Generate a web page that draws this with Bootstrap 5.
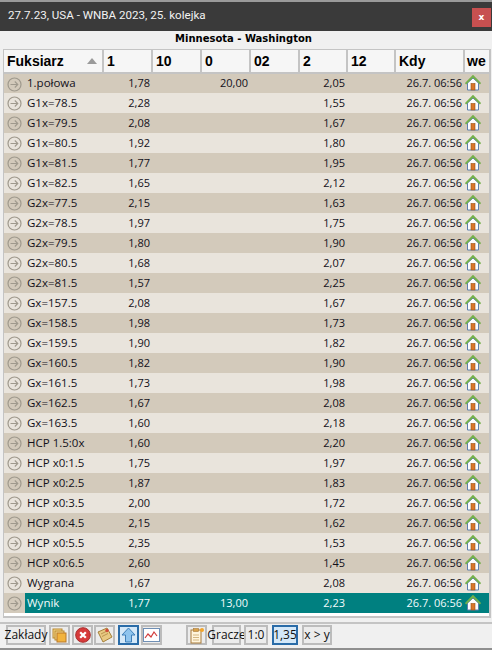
<!doctype html>
<html lang="en">

<head>
	<meta charset="utf-8">
	<meta name="viewport" content="width=device-width, initial-scale=1">
	<title>WNBA 2023</title>
	<link href="https://cdn.jsdelivr.net/npm/bootstrap@5.3.5/dist/css/bootstrap.min.css" rel="stylesheet"
		crossorigin="anonymous">
	<style>
		html, body { height: 100%; }
		body { background: #f0f0f0; font-family: "Open Sans", "Noto Sans", sans-serif; overflow: hidden; }
		.app-window { width: 492px; height: 650px; border-bottom: 2px solid #8f8f8f; }
		.title-bar { height: 31px; background: #3a3a3a; border-top: 2px solid #9a9a9a; color: #f2f2f2; font: 11.6px/27px Roboto, sans-serif; padding-left: 8px; }
		.close-box { width: 19px; height: 19px; margin: 6px 1px 0 0; background: #c75050; color: #fff; font: bold 9px/18px "DejaVu Sans", sans-serif; text-align: center; }
		.match-bar { height: 16px; padding-right: 5px; font: bold 10px/15px "DejaVu Sans", sans-serif; color: #000; text-align: center; }
		.odds-frame { height: 573px; margin: 2px 1px 0 3px; background: #fff; border: 1px solid #c4c4c4; border-bottom-width: 2px; border-right-width: 2px; }
		.odds-table { table-layout: fixed; width: 485px; border-collapse: collapse; margin: 0; color: #12101a; }
		.col-name { width: 99px; }
		.col-odd { width: 49px; }
		.col-odd-narrow { width: 48px; }
		.col-when { width: 69px; }
		.odds-table th { height: 23px; padding: 0 0 0 3px; background: #f6f6f6; border-right: 2px solid #c4c4c4; border-bottom: 2px solid #c4c4c4; font: bold 14px "Liberation Sans", sans-serif; color: #000; white-space: nowrap; }
		.odds-table th:last-child { padding-left: 2px; border-right: 0; }
		.odds-table td { height: 20px; padding: 0 2px 0 0; font-size: 11px; line-height: 18px; text-align: right; white-space: nowrap; border: 0; }
		.odds-table td.name-cell { text-align: left; padding-left: 23px; position: relative; font-size: 11.5px; }
		.odds-table td.home-cell { padding: 0 0 0 1px; text-align: left; line-height: 0; }
		.row-dark td { background: #d3cabb; }
		.row-light td { background: #e9e4dc; }
		.row-picked td { background: #008080; color: #f2fbfb; }
		.row-picked td.name-cell { background: linear-gradient(to right, #d3cabb 21px, #008080 21px); }
		.go-icon { position: absolute; left: 3px; top: 3px; }
		.sort-mark { width: 0; height: 0; border: 5px solid transparent; border-top: 0; border-bottom: 6px solid #9a9a9a; margin: 0 5px 0 0; }
		.tool-bar { height: 26px; margin-top: 4px; border-top: 2px solid #c4c4c4; padding: 1px 0 0 6px; }
		.tool-btn { height: 20px; width: 21px; flex: none; padding: 0; border: 2px solid #bcbcbc; background: #ececec; font-size: 12px; line-height: 16px; color: #111; display: flex; align-items: center; justify-content: center; border-radius: 0; white-space: nowrap; }
		.tool-btn.is-on { background: #d4e8f8; border-color: #2a6ca8; }
		.btn-tabs { width: 40px; }
		.btn-players { width: 29px; }
		.btn-score { width: 24px; }
		.btn-odds { width: 26px; }
		.btn-over { width: 30px; }
		.left-1 { margin-left: 1px; }
		.left-2 { margin-left: 2px; }
		.left-3 { margin-left: 3px; }
		.left-4 { margin-left: 4px; }
		.left-5 { margin-left: 5px; }
		.left-24 { margin-left: 24px; }
	</style>
</head>

<body>
	<svg width="0" height="0" class="position-absolute">
		<symbol id="go" viewBox="0 0 15 15">
			<circle cx="7.5" cy="7.5" r="6.5" fill="none" stroke="#9f998d" stroke-width="1.2"/>
			<path d="M3.5 7.500h7M7.800 4.500l3 3-3 3" fill="none" stroke="#9f998d" stroke-width="1.100"/>
		</symbol>
		<symbol id="home" viewBox="0 0 16 16">
			<path d="M2.500 8v7h11V8L8 3z" fill="#fdfdfd" stroke="#5c7fae"/>
			<path d="M.5 8.800 8 1.200l7.500 7.600" fill="none" stroke="#74b04a" stroke-width="2"/>
			<rect x="6" y="8.500" width="4" height="6.500" fill="#d9772a" stroke="#9a5216" stroke-width=".6"/>
		</symbol>
	</svg>

	<div class="app-window d-flex flex-column">
		<div class="title-bar d-flex justify-content-between">
			<span>27.7.23, USA - WNBA 2023, 25. kolejka</span>
			<span class="close-box">x</span>
		</div>
		<div class="match-bar">Minnesota - Washington</div>
		<div class="odds-frame overflow-hidden">
			<table class="odds-table">
				<colgroup>
					<col class="col-name"><col class="col-odd"><col class="col-odd"><col class="col-odd">
					<col class="col-odd"><col class="col-odd-narrow"><col class="col-odd-narrow"><col class="col-when"><col>
				</colgroup>
				<thead>
					<tr>
						<th><div class="d-flex justify-content-between align-items-center">Fuksiarz<span class="sort-mark"></span></div></th>
						<th>1</th><th>10</th><th>0</th><th>02</th><th>2</th><th>12</th><th>Kdy</th><th>we</th>
					</tr>
				</thead>
				<tbody id="oddsRows"></tbody>
			</table>
		</div>
		<div class="tool-bar d-flex">
			<button class="tool-btn btn-tabs">Zakłady</button>
			<button class="tool-btn left-3">
				<svg width="15" height="15" viewBox="0 0 15 15"><rect x="1" y="1" width="9" height="9" fill="#f6d98a" stroke="#b9872f"/><rect x="3" y="3" width="9" height="9" fill="#f6d98a" stroke="#b9872f"/><rect x="5" y="5" width="9" height="9" fill="#f2b33d" stroke="#b9782a"/></svg>
			</button>
			<button class="tool-btn left-2">
				<svg width="16" height="16" viewBox="0 0 17 17"><circle cx="8.5" cy="8.5" r="7.800" fill="#d63a3a" stroke="#a52b2b"/><path d="M5.500 5.500l6 6M11.500 5.500l-6 6" stroke="#fff" stroke-width="2.400"/></svg>
			</button>
			<button class="tool-btn left-1">
				<svg width="16" height="16" viewBox="0 0 16 16"><path d="M1 5 10 1l5 9-9 5z" fill="#e8c982" stroke="#a5803a"/><path d="M4 7l6-3M5 9.500l6-3" stroke="#a5803a" stroke-width=".7"/><circle cx="10" cy="3.500" r="1.700" fill="#d24a3a"/></svg>
			</button>
			<button class="tool-btn is-on left-3">
				<svg width="15" height="16" viewBox="0 0 15 16"><path d="M7.500 1 14 8h-3.500v7h-6V8H1z" fill="#8ec4ee" stroke="#3f7fb8"/></svg>
			</button>
			<button class="tool-btn left-2">
				<svg width="17" height="14" viewBox="0 0 17 14"><rect x=".5" y=".5" width="16" height="13" fill="#fff" stroke="#6f8fb5"/><path d="M2 10l3-4 3 3 3-5 3 4" fill="none" stroke="#d23b3b" stroke-width="1.200"/></svg>
			</button>
			<button class="tool-btn left-24">
				<svg width="16" height="17" viewBox="0 0 16 17"><rect x="2" y="3" width="10" height="13" fill="#fff5dc" stroke="#a87a3a"/><rect x="4.500" y="1.500" width="5" height="3" fill="#d9a24a" stroke="#a87a3a" stroke-width=".6"/><path d="M4 8h6M4 10.500h6M4 13h6" stroke="#c9a66a" stroke-width=".8"/><circle cx="13" cy="3" r="2" fill="#f3a52b"/></svg>
			</button>
			<button class="tool-btn btn-players left-5">Gracze</button>
			<button class="tool-btn btn-score left-3">1:0</button>
			<button class="tool-btn btn-odds is-on left-4">1,35</button>
			<button class="tool-btn btn-over left-4">x &gt; y</button>
		</div>
	</div>

	<script src="https://cdn.jsdelivr.net/npm/bootstrap@5.3.5/dist/js/bootstrap.bundle.min.js"
		crossorigin="anonymous"></script>
	<script>
		const rows = [
			['1.połowa', '1,78', '20,00', '2,05'], ['G1x=78.5', '2,28', '', '1,55'], ['G1x=79.5', '2,08', '', '1,67'],
			['G1x=80.5', '1,92', '', '1,80'], ['G1x=81.5', '1,77', '', '1,95'], ['G1x=82.5', '1,65', '', '2,12'],
			['G2x=77.5', '2,15', '', '1,63'], ['G2x=78.5', '1,97', '', '1,75'], ['G2x=79.5', '1,80', '', '1,90'],
			['G2x=80.5', '1,68', '', '2,07'], ['G2x=81.5', '1,57', '', '2,25'], ['Gx=157.5', '2,08', '', '1,67'],
			['Gx=158.5', '1,98', '', '1,73'], ['Gx=159.5', '1,90', '', '1,82'], ['Gx=160.5', '1,82', '', '1,90'],
			['Gx=161.5', '1,73', '', '1,98'], ['Gx=162.5', '1,67', '', '2,08'], ['Gx=163.5', '1,60', '', '2,18'],
			['HCP 1.5:0x', '1,60', '', '2,20'], ['HCP x0:1.5', '1,75', '', '1,97'], ['HCP x0:2.5', '1,87', '', '1,83'],
			['HCP x0:3.5', '2,00', '', '1,72'], ['HCP x0:4.5', '2,15', '', '1,62'], ['HCP x0:5.5', '2,35', '', '1,53'],
			['HCP x0:6.5', '2,60', '', '1,45'], ['Wygrana', '1,67', '', '2,08'], ['Wynik', '1,77', '13,00', '2,23']
		];

		document.getElementById('oddsRows').innerHTML = rows.map((r, i) => {
			const cls = r[0] === 'Wynik' ? 'row-picked' : (i % 2 ? 'row-light' : 'row-dark');
			return `<tr class="${cls}">
				<td class="name-cell"><svg class="go-icon" width="15" height="15"><use href="#go"/></svg>${r[0]}</td>
				<td>${r[1]}</td><td></td><td>${r[2]}</td><td></td><td>${r[3]}</td><td></td>
				<td>26.7. 06:56</td>
				<td class="home-cell"><svg width="16" height="16"><use href="#home"/></svg></td>
			</tr>`;
		}).join('');
	</script>
</body>

</html>
